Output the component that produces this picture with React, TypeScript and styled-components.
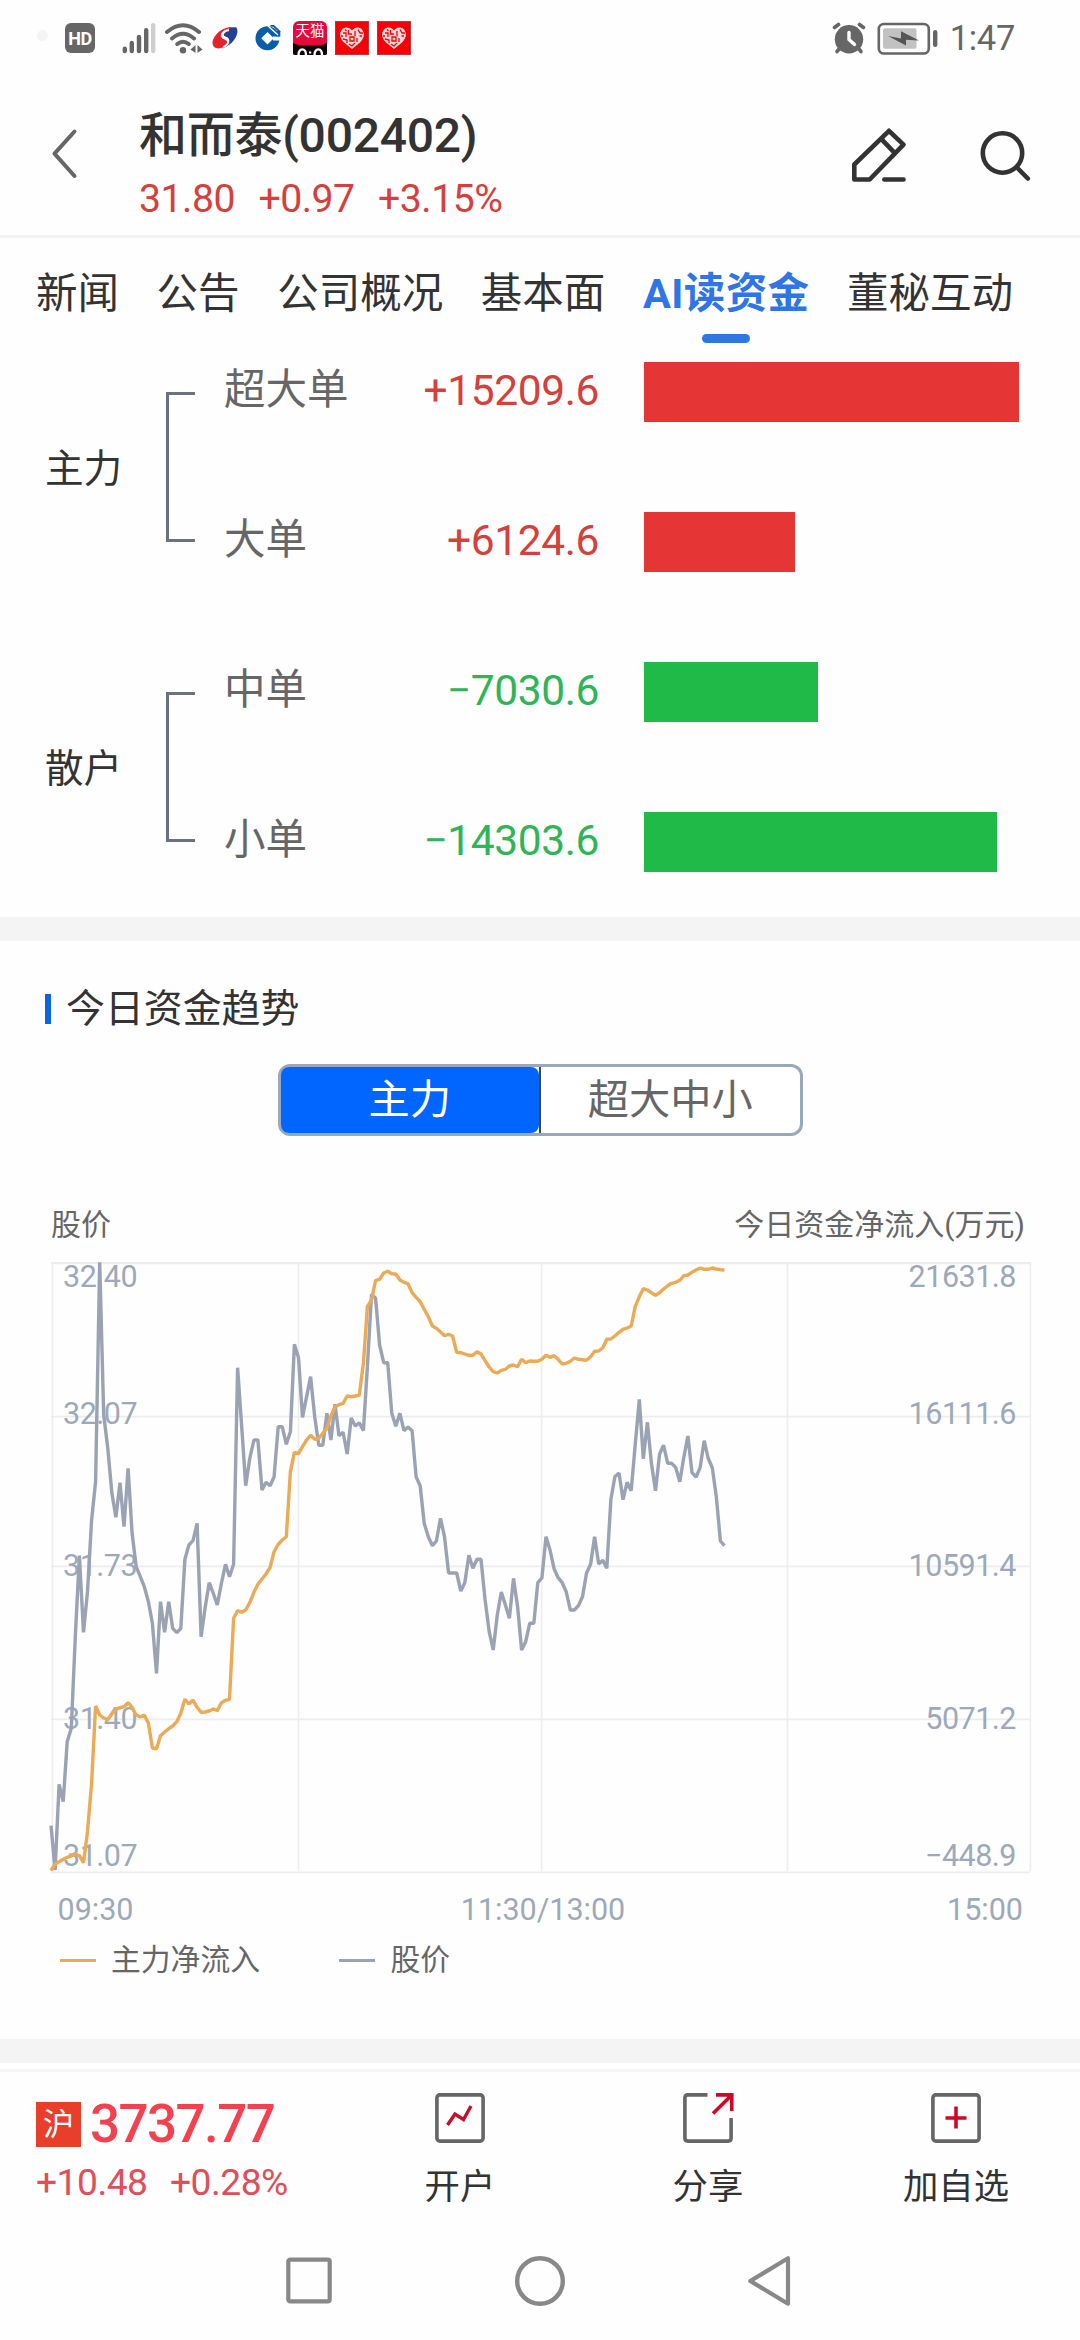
import React from 'react';
import styled, { createGlobalStyle } from 'styled-components';

const RED = '#d4403b';
const GREEN = '#2fb457';

const GlobalStyle = createGlobalStyle`
  * { box-sizing: border-box; }
  body {
    margin: 0;
    background: #fefefe;
    color: #333;
    font-family: Roboto, "Noto Sans CJK SC", sans-serif;
  }
  svg { display: block; flex: none; }
`;

const Screen = styled.div`
  display: flex;
  flex-direction: column;
  width: 1080px;
  height: 2340px;
  overflow: hidden;
  background: #fefefe;
  white-space: nowrap;
`;

/* ---------- status bar ---------- */

const StatusBar = styled.div`
  display: flex;
  justify-content: space-between;
  height: 75px;
  padding: 0 65px 0 37px;
`;

const StatusGroup = styled.div`
  display: flex;
  align-items: center;
  height: 76px;
`;

const Dot = styled.span`
  width: 11px;
  height: 11px;
  margin-top: -5px;
  border-radius: 50%;
  background: #f4f4f4;
`;

const HdBadge = styled.span`
  display: flex;
  align-items: center;
  justify-content: center;
  width: 30px;
  height: 30px;
  margin: 0 27px 0 17px;
  border-radius: 6px;
  background: #666;
  color: #fff;
  font-size: 18px;
  font-weight: 700;
  letter-spacing: -0.5px;
`;

const Gap = styled.span<{ $w: number }>`
  flex: none;
  width: ${(p) => p.$w}px;
`;

const TmallIcon = styled.span`
  display: flex;
  flex-direction: column;
  align-items: center;
  width: 34px;
  height: 34px;
  border-radius: 6px 6px 2px 2px;
  overflow: hidden;
  background: #e8083a;
  color: #fff;
  font-size: 14.5px;
  line-height: 22px;
`;

const Clock = styled.span`
  margin-left: 12px;
  color: #666;
  font-size: 34.5px;
  font-weight: 400;
  letter-spacing: -0.3px;
  line-height: 40px;
`;

/* ---------- header ---------- */

const Header = styled.header`
  display: flex;
  height: 163px;
  padding: 0 49px 0 50px;
  border-bottom: 3px solid #f3f3f3;
`;

const Titles = styled.div`
  display: flex;
  flex-direction: column;
  flex: 1;
  margin-left: 60px;
`;

const Title = styled.h1`
  margin: 33px 0 0;
  height: 69px;
  font-size: 48px;
  font-weight: 500;
  letter-spacing: -0.25px;
  line-height: 56px;
`;

const Quote = styled.div<{ $gap: number; $size: number; $color: string; $ls: number; $mt?: number }>`
  display: flex;
  gap: ${(p) => p.$gap}px;
  margin-top: ${(p) => p.$mt ?? 0}px;
  color: ${(p) => p.$color};
  font-size: ${(p) => p.$size}px;
  letter-spacing: ${(p) => p.$ls}px;
  line-height: 44px;
`;

const HeaderIcon = styled.span<{ $ml: number; $mt: number }>`
  margin: ${(p) => p.$mt}px 0 0 ${(p) => p.$ml}px;
`;

/* ---------- tabs ---------- */

const Tabs = styled.nav`
  display: flex;
  gap: 37.6px;
  height: 109px;
  padding: 0 36px;
`;

const Tab = styled.div<{ $active?: boolean }>`
  display: flex;
  flex-direction: column;
  align-items: center;
  color: ${(p) => (p.$active ? '#2f75e6' : '#333')};
  font-size: 41.5px;
  font-weight: ${(p) => (p.$active ? 700 : 400)};
  letter-spacing: ${(p) => (p.$active ? '0.4px' : '0')};
  line-height: 60px;
  padding-top: 25.5px;
`;

const TabMark = styled.span`
  width: 48px;
  height: 9px;
  margin-top: 10px;
  border-radius: 4.5px;
  background: #2f75e6;
`;

/* ---------- order flow bars ---------- */

const Flow = styled.section`
  display: flex;
  flex-direction: column;
  gap: 90px;
  height: 570px;
  padding: 15px 0 0 45px;
`;

const FlowGroup = styled.div`
  display: flex;
  align-items: center;
  height: 210px;
`;

const GroupName = styled.div`
  width: 120.5px;
  font-size: 38.6px;
  line-height: 50px;
  padding-top: 3px;
`;

const Bracket = styled.div`
  width: 29.5px;
  height: 150px;
  border: 3px solid #6b7180;
  border-right: none;
`;

const Entries = styled.div`
  display: flex;
  flex-direction: column;
  justify-content: space-between;
  height: 210px;
  margin-left: 29px;
`;

const Entry = styled.div`
  display: flex;
  align-items: center;
  height: 60px;
`;

const EntryName = styled.div`
  width: 160px;
  margin-top: -4px;
  color: #666;
  font-size: 41.5px;
  line-height: 60px;
`;

const Amount = styled.div<{ $up: boolean }>`
  width: 215px;
  margin: -3px 45px 0 0;
  color: ${(p) => (p.$up ? RED : GREEN)};
  font-size: 42.5px;
  letter-spacing: -0.4px;
  line-height: 60px;
  text-align: right;
`;

const Bar = styled.div<{ $up: boolean }>`
  height: 60px;
  background: ${(p) => (p.$up ? '#e53535' : '#1fba48')};
`;

const Divider = styled.div`
  flex: none;
  height: 24px;
  background: #f4f4f4;
`;

/* ---------- trend ---------- */

const Trend = styled.section`
  display: flex;
  flex-direction: column;
  height: 1098px;
  padding: 0 45px;
`;

const SectionTitle = styled.h2`
  display: flex;
  align-items: center;
  gap: 15px;
  height: 60px;
  margin: 38px 0 0;
  font-size: 38.9px;
  font-weight: 400;
  line-height: 60px;

  &::before {
    content: '';
    width: 6px;
    height: 30px;
    background: #0b66e4;
  }
`;

const Toggle = styled.div`
  display: flex;
  align-self: center;
  width: 525px;
  height: 72px;
  margin-top: 25px;
  border: 3px solid #9aa8bc;
  border-radius: 12px;
  background: #fff;
`;

const ToggleItem = styled.div<{ $on?: boolean }>`
  display: flex;
  align-items: center;
  justify-content: center;
  flex: 1;
  border-radius: 8px;
  background: ${(p) => (p.$on ? '#0066ff' : 'transparent')};
  color: ${(p) => (p.$on ? '#fff' : '#666')};
  font-size: 41.25px;
  line-height: 60px;
`;

const ToggleLine = styled.span`
  width: 2px;
  background: #3d4658;
`;

const ChartHead = styled.div`
  display: flex;
  justify-content: space-between;
  height: 50px;
  margin: 64px 10px 0 6px;
  color: #666;
  font-size: 30px;
  line-height: 50px;
`;

const ChartSvg = styled.svg`
  width: 1000px;
  height: 690px;
  margin-top: 4px;
  font-size: 30.5px;
`;

const Legend = styled.div`
  display: flex;
  gap: 79.5px;
  padding-left: 15px;
  color: #666;
  font-size: 29.8px;
  line-height: 50px;
  margin-top: -9px;
`;

const LegendItem = styled.div<{ $color: string }>`
  display: flex;
  align-items: center;
  gap: 15px;

  &::before {
    content: '';
    width: 36px;
    height: 3px;
    background: ${(p) => p.$color};
  }
`;

/* ---------- bottom ---------- */

const BottomBar = styled.footer`
  display: flex;
  height: 158px;
  margin-top: 6px;
  border-top: 3px solid #f4f5f8;
`;

const IndexBox = styled.div`
  display: flex;
  flex-direction: column;
  width: 336px;
  padding: 24px 0 0 36px;
`;

const IndexRow = styled.div`
  display: flex;
  align-items: center;
  gap: 9px;
  height: 56px;
`;

const MarketBadge = styled.span`
  display: flex;
  align-items: center;
  justify-content: center;
  width: 45px;
  height: 45px;
  background: #e83e2c;
  color: #fff;
  font-size: 31px;
  line-height: 45px;
`;

const IndexValue = styled.span`
  color: #f0424f;
  font-size: 53px;
  font-weight: 500;
  letter-spacing: -1.6px;
`;

const Action = styled.div`
  display: flex;
  flex-direction: column;
  align-items: center;
  width: 248px;
  padding-top: 21px;
  font-size: 35.4px;
  line-height: 50px;

  span { margin-top: 19px; }
`;

const NavBar = styled.div`
  display: flex;
  justify-content: center;
  align-items: center;
  gap: 180px;
  height: 108px;
`;

/* ---------- data ---------- */

type FlowEntry = { name: string; value: number; bar: number };

const groups: { name: string; entries: FlowEntry[] }[] = [
  { name: '主力', entries: [{ name: '超大单', value: 15209.6, bar: 375 }, { name: '大单', value: 6124.6, bar: 151 }] },
  { name: '散户', entries: [{ name: '中单', value: -7030.6, bar: 173.5 }, { name: '小单', value: -14303.6, bar: 352.5 }] },
];

// One sample per minute since 09:30, in thirds of a pixel below y = 1190.
const price = [
  1907, 2040, 1783, 1835, 1655, 1615, 1340, 1097, 1327, 1205, 990, 875, 217, 675, 775, 910, 982, 878, 1010, 835,
  1030, 1130, 1160, 1190, 1235, 1300, 1450, 1235, 1327, 1235, 1315, 1328, 1315, 1108, 1065, 1052, 1000, 1340, 1252, 1178,
  1210, 1245, 1180, 1123, 1160, 1123, 533, 710, 887, 805, 750, 750, 900, 877, 887, 860, 710, 710, 763, 725,
  463, 503, 682, 620, 560, 680, 766, 766, 670, 750, 643, 737, 727, 792, 684, 708, 698, 722, 530, 313,
  325, 465, 518, 518, 670, 709, 670, 722, 711, 722, 860, 888, 1000, 1040, 1067, 1053, 985, 1040, 1149, 1149,
  1149, 1203, 1178, 1096, 1135, 1108, 1108, 1230, 1325, 1380, 1275, 1206, 1245, 1285, 1165, 1250, 1380, 1355, 1300, 1300,
  1178, 1164, 1040, 1080, 1136, 1163, 1178, 1205, 1260, 1260, 1247, 1220, 1150, 1123, 1040, 1122, 1111, 1135, 928, 860,
  849, 929, 877, 902, 765, 628, 806, 697, 820, 902, 792, 766, 820, 820, 833, 875, 800, 738, 848, 861,
  833, 752, 805, 833, 920, 1053, 1067,
];

const inflow = [
  2042, 2022, 2015, 2008, 2002, 1998, 1992, 1997, 2018, 1925, 1780, 1548, 1575, 1584, 1589, 1572, 1558, 1553, 1550, 1538,
  1552, 1575, 1581, 1575, 1600, 1674, 1676, 1637, 1626, 1616, 1608, 1595, 1570, 1528, 1542, 1530, 1552, 1567, 1566, 1563,
  1557, 1562, 1538, 1531, 1528, 1285, 1262, 1267, 1260, 1238, 1207, 1183, 1167, 1152, 1132, 1085, 1063, 1050, 1040, 845,
  787, 791, 770, 750, 736, 748, 745, 730, 715, 678, 650, 644, 640, 618, 620, 618, 615, 520, 350, 330,
  271, 268, 249, 244, 251, 252, 270, 277, 281, 308, 322, 335, 358, 380, 408, 415, 426, 437, 433, 438,
  487, 488, 492, 496, 496, 485, 492, 512, 531, 545, 549, 541, 538, 528, 525, 530, 508, 518, 513, 514,
  514, 508, 496, 502, 497, 508, 522, 520, 514, 504, 508, 509, 511, 500, 484, 483, 473, 448, 447, 438,
  427, 418, 414, 408, 350, 320, 296, 300, 308, 316, 308, 297, 287, 280, 277, 271, 257, 255, 247, 240,
  234, 238, 238, 234, 237, 239, 240,
];

const toPoints = (samples: number[]) =>
  samples.map((v, i) => `${(51 + i * 4.057).toFixed(1)},${(1190 + v / 3).toFixed(1)}`).join(' ');

const yTicks = [
  { y: 1287, left: '32.40', right: '21631.8' },
  { y: 1424, left: '32.07', right: '16111.6' },
  { y: 1576, left: '31.73', right: '10591.4' },
  { y: 1729, left: '31.40', right: '5071.2' },
  { y: 1866, left: '31.07', right: '−448.9' },
];

function Chart() {
  return (
    <ChartSvg viewBox="45 1254 1000 690">
      <g stroke="#ededed" strokeWidth="1.6">
        <path d="M51 1263.2H1030" strokeWidth="2.2" />
        <path d="M51 1416.6H1030M51 1566.4H1030M51 1719.4H1030M51 1872.4H1030" />
        <path d="M52.4 1262V1871M298.5 1262V1871M541.6 1262V1871M787.5 1262V1871M1030.4 1262V1871" />
      </g>
      <g fill="#9da9bb" letterSpacing="-0.5">
        {yTicks.map((t) => (
          <React.Fragment key={t.y}>
            <text x="63" y={t.y}>{t.left}</text>
            <text x="1016" y={t.y} textAnchor="end">{t.right}</text>
          </React.Fragment>
        ))}
      </g>
      <g fill="#9da9bb">
        <text x="57.5" y="1919.5">09:30</text>
        <text x="543" y="1919.5" textAnchor="middle">11:30/13:00</text>
        <text x="1023" y="1919.5" textAnchor="end">15:00</text>
      </g>
      <g fill="none" strokeWidth="3.4" strokeLinejoin="bevel">
        <polyline stroke="#9aa2b4" points={toPoints(price)} />
        <polyline stroke="#ebaa55" points={toPoints(inflow)} />
      </g>
    </ChartSvg>
  );
}

/* ---------- icons ---------- */

const Signal = () => (
  <svg width="34" height="34" viewBox="122 20 34 34" fill="none" strokeWidth="4.4" strokeLinecap="round" stroke="#666">
    <path d="M124.8 47.8V50M131.8 42V50M139 36V50M146.2 29.3V50" />
    <path d="M153.2 24.3V50" stroke="#cfcfcf" />
  </svg>
);

const Wifi = () => (
  <svg width="42" height="34" viewBox="163 20 42 34" fill="none" stroke="#666" strokeWidth="4" strokeLinecap="round">
    <path d="M167 31Q183 17.500 199 31M172 37.500Q183 28 194 37.500M177.300 43Q183 38.500 188.700 43" />
    <circle cx="183" cy="49.200" r="3.200" fill="#666" stroke="none" />
    <path d="M190.500 48.500L195.500 44V52ZM197.500 44V52L202.500 48.500Z" fill="#666" stroke="none" />
  </svg>
);

const SwirlLogo = () => (
  <svg width="26" height="24" viewBox="212 25 26 24">
    <path d="M236.500 26.500C240 33 233 44.500 222 47.500C228 43.500 230.500 40.500 228.500 37.500C226 34.500 221.500 36 224 31.500C226.500 27.500 232 25.500 236.500 26.500Z" fill="#273f92" />
    <path d="M233 26C222 25 212 35.500 212.600 42.500C213 48.500 221 48.800 225.500 44.500C228 42 227.500 39.500 224.500 38.500C219.500 37 219.500 31.500 225.500 28.800C228 27.500 230.500 26.700 233 26Z" fill="#e5232f" />
    <path d="M229 29C222.500 30.500 221 35 225 36.600C230.500 38.500 229 43.500 223.500 46" fill="none" stroke="#fff" strokeWidth="1.800" />
  </svg>
);

const CoinLogo = () => (
  <svg width="26" height="26" viewBox="255 25 26 26">
    <circle cx="267.500" cy="38.300" r="12" fill="#0a5ca6" />
    <path d="M273 36.500H281V40.500H273Z" fill="#fefefe" />
    <path d="M274 31H280.300V36.500H276Z" fill="#0a5ca6" />
    <path d="M267.500 32L273.800 38.300L267.500 44.600L261.200 38.300Z" fill="#fefefe" />
    <path d="M268 26L278 35" fill="none" stroke="#fefefe" strokeWidth="1.400" />
    <path d="M270.500 25.800H273.500L280 31.800" fill="none" stroke="#0a5ca6" strokeWidth="1.800" />
  </svg>
);

const CatFace = () => (
  <svg width="34" height="12" viewBox="0 0 34 12">
    <path d="M0 0L6 2.500H28L34 0V12H0Z" fill="#0c0608" />
    <path d="M5.500 12C5.500 4.500 13 4.500 13 12M21.500 12C21.500 4.500 29 4.500 29 12" fill="none" stroke="#fff" strokeWidth="2.400" />
    <rect x="16" y="8.500" width="2.200" height="2" fill="#fff" />
  </svg>
);

const HeartLogo = () => (
  <svg width="34" height="34" viewBox="0 0 34 34">
    <rect width="34" height="34" fill="#c8323c" />
    <rect x="1" y="1" width="32" height="32" fill="#f40006" />
    <path d="M17 28L9 21.500C4.500 17 4 12 7 8.500C10 5.500 14.500 6 17 9.500C19.500 6 24 5.500 27 8.500C30 12 29.500 17 25 21.500Z" fill="#fbd6d8" />
    <path d="M8 12H11V16M13.500 9V13H17M20 10V15M23 8.500L25 12H28M8 18L12 19V22M15 16H19V20H15ZM22 17V21M24.500 15H27M14 23L17 25L20 22M10 8.500L11.500 10M6 15H8" fill="none" stroke="#f40006" strokeWidth="1.300" />
  </svg>
);

const Alarm = () => (
  <svg width="34" height="34" viewBox="832 20 34 34" fill="none" stroke="#666" strokeLinecap="round">
    <circle cx="849" cy="38.300" r="14.200" fill="#666" stroke="none" />
    <path d="M834.500 26.500L838.500 23.500M863.500 26.500L859.500 23.500" strokeWidth="3.600" />
    <path d="M837 50.500L839.500 47.500M861 50.500L858.500 47.500" strokeWidth="3.600" />
    <path d="M849 31.500V38.500L854.500 43.500" stroke="#fff" strokeWidth="3.400" />
  </svg>
);

const Battery = () => (
  <svg width="61" height="34" viewBox="877 20 61 34">
    <rect x="878.800" y="23" width="50" height="29.500" rx="5" fill="none" stroke="#666" strokeWidth="2.600" />
    <rect x="883" y="27.300" width="33.500" height="20.500" rx="2" fill="#c2c2c2" />
    <path d="M888 35L901 37.500V30.300L919 39.500L906 38.700V44.500Z" fill="#555" />
    <rect x="933" y="29" width="4.400" height="17" rx="2.200" fill="#666" />
  </svg>
);

const Back = () => (
  <svg width="29" height="54" viewBox="50 127 29 54" fill="none" stroke="#666" strokeWidth="4" strokeLinecap="round" strokeLinejoin="round">
    <path d="M74.500 131.500L54.500 153.700L74.500 176" />
  </svg>
);

const Edit = () => (
  <svg width="56" height="56" viewBox="851 127 56 56" fill="none" stroke="#333" strokeWidth="4.600" strokeLinecap="round" strokeLinejoin="round">
    <path d="M889 130.800L903.500 144.700L869.700 179.500H854.300V164.500ZM881 138.700L894.600 152.800M884.300 179.500H903.500" />
  </svg>
);

const Search = () => (
  <svg width="52" height="52" viewBox="979.500 130 52 52" fill="none" stroke="#333" strokeWidth="4.600" strokeLinecap="round">
    <circle cx="1003" cy="153" r="19.700" />
    <path d="M1017.500 167.500L1028.300 178.500" />
  </svg>
);

const OpenAccount = () => (
  <svg width="50" height="50" viewBox="0 0 50 50" fill="none">
    <rect x="1.900" y="1.900" width="46.200" height="46.200" rx="3" stroke="#666" strokeWidth="3.600" />
    <path d="M12.500 32L20 21L28.500 26.500L36 13" stroke="#c4102b" strokeWidth="3.400" />
  </svg>
);

const Share = () => (
  <svg width="50" height="50" viewBox="0 0 50 50" fill="none" overflow="visible">
    <path d="M24.500 1.900H5Q1.900 1.900 1.900 5V45Q1.900 48.100 5 48.100H45Q48.100 48.100 48.100 45V25" stroke="#666" strokeWidth="3.600" />
    <path d="M33 1.900H48.800V18M48.500 2.200L30 20.500" stroke="#cc0a26" strokeWidth="3.600" />
  </svg>
);

const AddFavorite = () => (
  <svg width="50" height="50" viewBox="0 0 50 50" fill="none">
    <rect x="1.900" y="1.900" width="46.200" height="46.200" rx="3" stroke="#666" strokeWidth="3.600" />
    <path d="M14.500 25H35.500M25 13.500V35.500" stroke="#cc0a26" strokeWidth="3.600" />
  </svg>
);

const NavIcons = () => (
  <>
    <svg width="50" height="52" viewBox="0 0 50 52" fill="none" stroke="#888" strokeWidth="4.200">
      <rect x="4.300" y="4.600" width="41.400" height="41.800" rx="2" />
    </svg>
    <svg width="52" height="52" viewBox="0 0 52 52" fill="none" stroke="#888" strokeWidth="4.400">
      <circle cx="26" cy="26" r="22.800" />
    </svg>
    <svg width="50" height="52" viewBox="0 0 50 52" fill="none" stroke="#888" strokeWidth="4.200" strokeLinejoin="round">
      <path d="M4.300 26L42 3.300V48.700Z" />
    </svg>
  </>
);

/* ---------- page ---------- */

const tabs = ['新闻', '公告', '公司概况', '基本面', 'AI读资金', '董秘互动'];

const formatAmount = (v: number) => (v > 0 ? '+' : '−') + Math.abs(v).toFixed(1);

export default function App() {
  return (
    <Screen>
      <GlobalStyle />
      <StatusBar>
        <StatusGroup>
          <Dot />
          <HdBadge>HD</HdBadge>
          <Signal />
          <Gap $w={7} />
          <Wifi />
          <Gap $w={7} />
          <SwirlLogo />
          <Gap $w={17} />
          <CoinLogo />
          <Gap $w={12} />
          <TmallIcon>
            天猫
            <CatFace />
          </TmallIcon>
          <Gap $w={8} />
          <HeartLogo />
          <Gap $w={8} />
          <HeartLogo />
        </StatusGroup>
        <StatusGroup>
          <Alarm />
          <Gap $w={11} />
          <Battery />
          <Clock>1:47</Clock>
        </StatusGroup>
      </StatusBar>

      <Header>
        <HeaderIcon $ml={0} $mt={52}><Back /></HeaderIcon>
        <Titles>
          <Title>和而泰(002402)</Title>
          <Quote $gap={23.5} $size={39.2} $color={RED} $ls={-0.5}>
            <span>31.80</span>
            <span>+0.97</span>
            <span>+3.15%</span>
          </Quote>
        </Titles>
        <HeaderIcon $ml={0} $mt={52}><Edit /></HeaderIcon>
        <HeaderIcon $ml={72.500} $mt={55}><Search /></HeaderIcon>
      </Header>

      <Tabs>
        {tabs.map((t) => (
          <Tab key={t} $active={t === 'AI读资金'}>
            {t}
            {t === 'AI读资金' && <TabMark />}
          </Tab>
        ))}
      </Tabs>

      <Flow>
        {groups.map((g) => (
          <FlowGroup key={g.name}>
            <GroupName>{g.name}</GroupName>
            <Bracket />
            <Entries>
              {g.entries.map((e) => (
                <Entry key={e.name}>
                  <EntryName>{e.name}</EntryName>
                  <Amount $up={e.value > 0}>{formatAmount(e.value)}</Amount>
                  <Bar $up={e.value > 0} style={{ width: e.bar }} />
                </Entry>
              ))}
            </Entries>
          </FlowGroup>
        ))}
      </Flow>

      <Divider />

      <Trend>
        <SectionTitle>今日资金趋势</SectionTitle>
        <Toggle>
          <ToggleItem $on>主力</ToggleItem>
          <ToggleLine />
          <ToggleItem>超大中小</ToggleItem>
        </Toggle>
        <ChartHead>
          <span>股价</span>
          <span>今日资金净流入(万元)</span>
        </ChartHead>
        <Chart />
        <Legend>
          <LegendItem $color="#ebaa55">主力净流入</LegendItem>
          <LegendItem $color="#9aa2b4">股价</LegendItem>
        </Legend>
      </Trend>

      <Divider />

      <BottomBar>
        <IndexBox>
          <IndexRow>
            <MarketBadge>沪</MarketBadge>
            <IndexValue>3737.77</IndexValue>
          </IndexRow>
          <Quote $gap={22.5} $size={37.2} $color="#dd4f59" $ls={-0.5} $mt={8}>
            <span>+10.48</span>
            <span>+0.28%</span>
          </Quote>
        </IndexBox>
        <Action><OpenAccount /><span>开户</span></Action>
        <Action><Share /><span>分享</span></Action>
        <Action><AddFavorite /><span>加自选</span></Action>
      </BottomBar>

      <NavBar>
        <NavIcons />
      </NavBar>
    </Screen>
  );
}
